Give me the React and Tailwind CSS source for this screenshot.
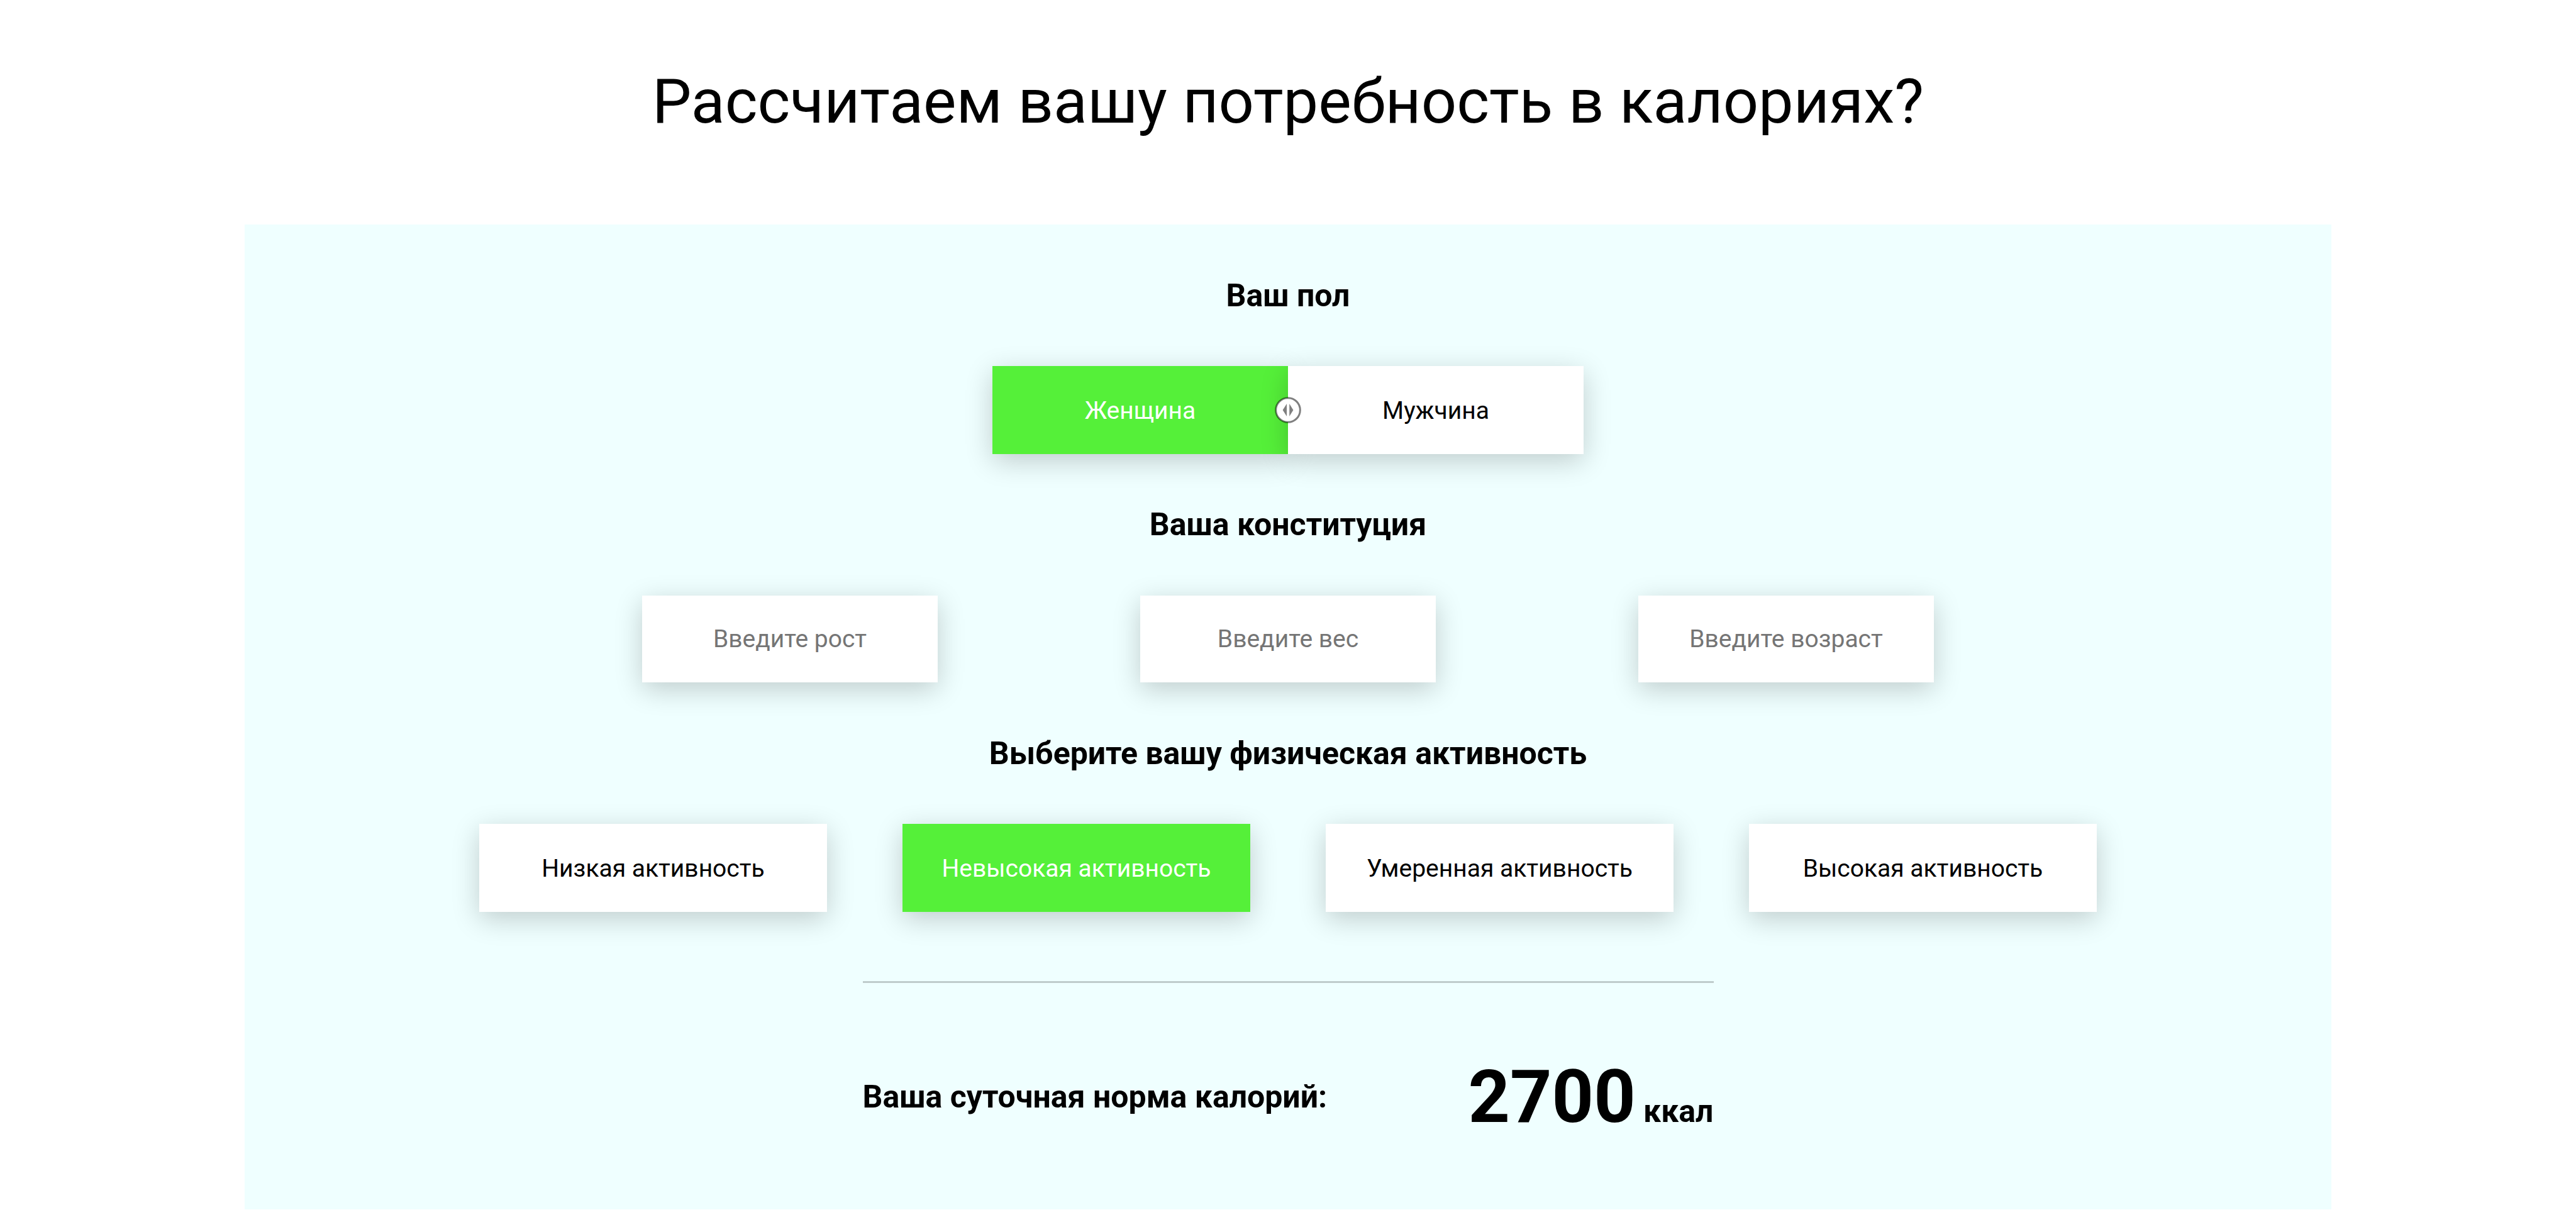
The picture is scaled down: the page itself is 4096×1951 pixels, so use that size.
import { useState } from "react";

const cardShadow = "shadow-[0_11px_41px_rgba(0,0,0,0.2)]";

function ChoiceButton({ selected, onClick, className, children }) {
  return (
    <button
      type="button"
      aria-pressed={selected}
      onClick={onClick}
      className={`h-[140px] pt-0.5 text-[39px] leading-[48px] ${cardShadow} ${
        selected ? "bg-[#55f039] text-white" : "bg-white text-black"
      } ${className}`}
    >
      {children}
    </button>
  );
}

function SectionTitle({ children }) {
  return (
    <h2 className="text-center text-[50px] leading-[60px] font-bold">{children}</h2>
  );
}

function SliderHandle() {
  return (
    <svg
      aria-hidden="true"
      viewBox="-21 -21 42 42"
      className="pointer-events-none absolute top-1/2 left-1/2 size-[42px] -translate-x-1/2 -translate-y-1/2"
    >
      <circle r="19.3" fill="#fff" />
      <circle r="19.3" fill="none" stroke="#000" strokeOpacity="0.5" strokeWidth="3" />
      <path d="M-2 -10V10L-8.4 0Z M2.2 -10V10L8.4 0Z" fill="#808080" />
    </svg>
  );
}

const genders = ["Женщина", "Мужчина"];
const fields = [
  { name: "height", label: "Введите рост" },
  { name: "weight", label: "Введите вес" },
  { name: "age", label: "Введите возраст" },
];
const activities = [
  "Низкая активность",
  "Невысокая активность",
  "Умеренная активность",
  "Высокая активность",
];

export default function App() {
  const [gender, setGender] = useState(0);
  const [activity, setActivity] = useState(1);

  return (
    <main className="min-h-screen bg-white pt-[101px] font-[Roboto,sans-serif] text-black">
      <h1 className="text-center text-[99px] leading-[120px]">
        Рассчитаем вашу потребность в калориях?
      </h1>

      <section className="mx-auto mt-[136px] flex w-[81%] flex-col items-center bg-[#efffff] pt-[83px] pb-[111px]">
        <SectionTitle>Ваш пол</SectionTitle>
        <div className="relative my-[82px] flex">
          {genders.map((name, i) => (
            <ChoiceButton
              key={name}
              selected={gender === i}
              onClick={() => setGender(i)}
              className="w-[470px]"
            >
              {name}
            </ChoiceButton>
          ))}
          <SliderHandle />
        </div>

        <SectionTitle>Ваша конституция</SectionTitle>
        <div className="my-[82px] flex gap-[322px] py-px">
          {fields.map((field) => (
            <input
              key={field.name}
              type="text"
              name={field.name}
              aria-label={field.label}
              placeholder={field.label}
              className={`h-[138px] w-[470px] bg-white text-center text-[39px] leading-[48px] placeholder:text-[#757575] ${cardShadow}`}
            />
          ))}
        </div>

        <SectionTitle>Выберите вашу физическая активность</SectionTitle>
        <div className="mt-[82px] flex gap-[120px]">
          {activities.map((name, i) => (
            <ChoiceButton
              key={name}
              selected={activity === i}
              onClick={() => setActivity(i)}
              className="w-[553px]"
            >
              {name}
            </ChoiceButton>
          ))}
        </div>

        <div className="mt-[110px] flex w-[1353px] items-center justify-between border-t-3 border-[#bfcccc] pt-[113px] text-[50px] leading-[60px] font-bold">
          <p>Ваша суточная норма калорий:</p>
          <p>
            <span className="text-[116px] leading-[136px]">2700</span> ккал
          </p>
        </div>
      </section>
    </main>
  );
}
